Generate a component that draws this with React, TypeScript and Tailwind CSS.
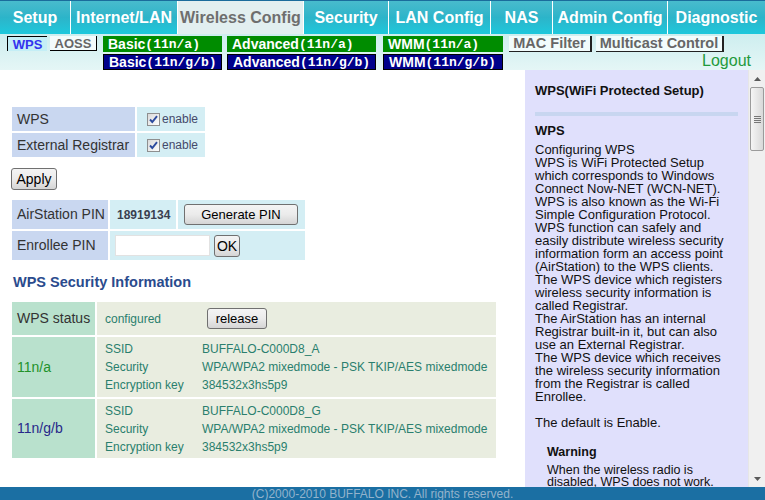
import type { ReactNode } from 'react'

const tabs = [
  { label: 'Setup', w: 'w-[70px]' },
  { label: 'Internet/LAN', w: 'w-[107px]' },
  { label: 'Wireless Config', w: 'w-[126px]', active: true },
  { label: 'Security', w: 'w-[85px]' },
  { label: 'LAN Config', w: 'w-[102px]' },
  { label: 'NAS', w: 'w-[62px]' },
  { label: 'Admin Config', w: 'w-[115px]' },
  { label: 'Diagnostic', w: 'w-[98px]' },
]

const helpLines = [
  'Configuring WPS',
  'WPS is WiFi Protected Setup',
  'which corresponds to Windows',
  'Connect Now-NET (WCN-NET).',
  'WPS is also known as the Wi-Fi',
  'Simple Configuration Protocol.',
  'WPS function can safely and',
  'easily distribute wireless security',
  'information form an access point',
  '(AirStation) to the WPS clients.',
  'The WPS device which registers',
  'wireless security information is',
  'called Registrar.',
  'The AirStation has an internal',
  'Registrar built-in it, but can also',
  'use an External Registrar.',
  'The WPS device which receives',
  'the wireless security information',
  'from the Registrar is called',
  'Enrollee.',
]

function Btn({ children, className }: { children: ReactNode; className: string }) {
  return (
    <button
      className={`rounded-[3px] border border-[#707070] bg-gradient-to-b from-[#f4f4f4] via-[#ebebeb] to-[#d5d5d5] text-black leading-none ${className}`}
    >
      {children}
    </button>
  )
}

function Check() {
  return (
    <svg width="13" height="13" viewBox="0 0 13 13">
      <defs>
        <linearGradient id="cb" x1="0" y1="0" x2="1" y2="1">
          <stop offset="0" stopColor="#d8d8d8" />
          <stop offset="1" stopColor="#ffffff" />
        </linearGradient>
      </defs>
      <rect x="0.5" y="0.5" width="12" height="12" fill="url(#cb)" stroke="#8e8f8f" />
      <path d="M3 6.5 L5.3 9 L10 3.2" fill="none" stroke="#2b4a9e" strokeWidth="1.9" />
    </svg>
  )
}

function BandBtn({ name, band, green }: { name: string; band: string; green?: boolean }) {
  return (
    <div
      className={`h-[16px] pl-[5px] flex items-center text-white font-bold leading-none ${
        green ? 'bg-[#008c00]' : 'bg-[#00008a] border border-black'
      }`}
    >
      <span className="text-[14px]">{name}</span>
      <span className="text-[13px] font-['Liberation_Mono',monospace]">{band}</span>
    </div>
  )
}

function Scrollbar() {
  return (
    <div className="w-[17px] flex flex-col bg-[#f0f0f0] border-l border-[#e6e6e6]">
      <div className="h-[17px] flex items-center justify-center">
        <svg width="7" height="4" viewBox="0 0 7 4">
          <path d="M0 4 L3.5 0 L7 4 Z" fill="#5a5a5a" />
        </svg>
      </div>
      <div className="h-[64px] mx-[1px] rounded-[2px] border border-[#9b9b9b] bg-gradient-to-r from-[#f5f5f5] to-[#d9d9d9] flex flex-col items-center justify-center gap-[1px]">
        <div className="w-[7px] h-[1px] bg-[#777]" />
        <div className="w-[7px] h-[1px] bg-[#777]" />
        <div className="w-[7px] h-[1px] bg-[#777]" />
        <div className="w-[7px] h-[1px] bg-[#777]" />
      </div>
      <div className="flex-1" />
      <div className="h-[17px] flex items-center justify-center">
        <svg width="7" height="4" viewBox="0 0 7 4">
          <path d="M0 0 L3.5 4 L7 0 Z" fill="#5a5a5a" />
        </svg>
      </div>
    </div>
  )
}

function BandInfo({ ssid }: { ssid: string }) {
  return (
    <div className="pl-[8px] py-[3px] grid grid-cols-[97px_1fr] text-[12px] leading-[18px] text-[#2a7f6e]">
      <span>SSID</span>
      <span>{ssid}</span>
      <span>Security</span>
      <span>WPA/WPA2 mixedmode - PSK TKIP/AES mixedmode</span>
      <span>Encryption key</span>
      <span>384532x3hs5p9</span>
    </div>
  )
}

export default function App() {
  return (
    <div className="w-[765px] h-[500px] flex flex-col overflow-hidden bg-white font-['Liberation_Sans',Arial,sans-serif]">
      {/* Main tabs */}
      <div className="h-[34px] flex border-t border-[#1a6c9c]">
        {tabs.map((t, i) => (
          <div
            key={t.label}
            className={`${t.w} flex items-center justify-center text-[16px] font-bold ${
              i > 0 ? 'border-l border-white' : ''
            } ${
              t.active
                ? 'bg-[#e2eff0] text-[#6e6e6e]'
                : 'bg-gradient-to-b from-[#48bbcd] via-[#2cb4c9] to-[#1cc8dc] text-white'
            }`}
          >
            {t.label}
          </div>
        ))}
      </div>

      {/* Sub navigation */}
      <div className="h-[36px] flex pl-[7px] pt-[2px] bg-gradient-to-b from-[#cdeeef] to-[#e5f6f6]">
        <div className="flex gap-[3px] h-[15px]">
          <span className="w-[40px] h-[15px] border-t border-l border-black bg-[#c4eef6] text-[#3333ee] font-bold text-[13px] leading-none flex items-center justify-center">
            WPS
          </span>
          <span className="w-[47px] h-[15px] border-r border-b border-black bg-[#f3fbfb] text-[#666] font-bold text-[13px] leading-none flex items-center justify-center">
            AOSS
          </span>
        </div>
        <div className="ml-[6px] w-[119px] flex flex-col gap-[2px]">
          <BandBtn name="Basic" band="(11n/a)" green />
          <BandBtn name="Basic" band="(11n/g/b)" />
        </div>
        <div className="ml-[5px] w-[149px] flex flex-col gap-[2px]">
          <BandBtn name="Advanced" band="(11n/a)" green />
          <BandBtn name="Advanced" band="(11n/g/b)" />
        </div>
        <div className="ml-[7px] w-[120px] flex flex-col gap-[2px]">
          <BandBtn name="WMM" band="(11n/a)" green />
          <BandBtn name="WMM" band="(11n/g/b)" />
        </div>
        <div className="ml-[6px] flex-1 flex flex-col pr-[14px]">
          <div className="flex gap-[4px]">
            <span className="w-[83px] h-[16px] border-r-2 border-b border-[#222] bg-[#f2fcfc] text-[#666] font-bold text-[14.5px] leading-none flex items-center justify-center">
              MAC Filter
            </span>
            <span className="w-[128px] h-[16px] border-r-2 border-b border-[#222] bg-[#f2fcfc] text-[#666] font-bold text-[14.5px] leading-none flex items-center justify-center">
              Multicast Control
            </span>
          </div>
          <div className="text-right text-[16px] leading-[17px] text-[#1f9a3c]">Logout</div>
        </div>
      </div>

      {/* Content */}
      <div className="flex flex-1 min-h-0">
        <div className="w-[525px] pl-[12px] pt-[37px] text-[#333]">
          <div className="w-[193px] grid grid-cols-[123px_68px] gap-[2px] text-[14px]">
            <div className="h-[24px] pl-[5px] flex items-center bg-[#c9d7f0]">WPS</div>
            <div className="h-[24px] pl-[10px] flex items-center gap-[2px] bg-[#d4eef4] text-[12px] text-[#44496a]">
              <Check />
              <span>enable</span>
            </div>
            <div className="h-[24px] pl-[5px] flex items-center bg-[#c9d7f0]">External Registrar</div>
            <div className="h-[24px] pl-[10px] flex items-center gap-[2px] bg-[#d4eef4] text-[12px] text-[#44496a]">
              <Check />
              <span>enable</span>
            </div>
          </div>

          <Btn className="mt-[11px] -ml-[1px] h-[22px] w-[46px] text-[14px]">Apply</Btn>

          <div className="mt-[9px] w-[293px] grid grid-cols-[96px_66px_127px] gap-[2px] text-[14px]">
            <div className="h-[29px] pl-[5px] flex items-center bg-[#c9d7f0]">AirStation PIN</div>
            <div className="h-[29px] pl-[7px] flex items-center bg-[#d4eef4] text-[12px] font-bold text-[#3a4050]">
              18919134
            </div>
            <div className="h-[29px] pl-[6px] flex items-center bg-[#d4eef4]">
              <Btn className="h-[21px] w-[114px] text-[13px]">Generate PIN</Btn>
            </div>
            <div className="h-[29px] pl-[5px] flex items-center bg-[#c9d7f0]">Enrollee PIN</div>
            <div className="col-span-2 h-[29px] pl-[5px] flex items-center gap-[4px] bg-[#d4eef4]">
              <div className="w-[95px] h-[21px] bg-white border border-[#e2e2e2]" />
              <Btn className="h-[22px] w-[26px] text-[14px]">OK</Btn>
            </div>
          </div>

          <div className="mt-[14px] h-[18px] pl-[1px] flex items-center text-[14.5px] font-bold text-[#2a4b8d]">
            WPS Security Information
          </div>

          <div className="mt-[10px] w-[484px] grid grid-cols-[83px_399px] gap-[2px] text-[14px]">
            <div className="h-[33px] pl-[5px] flex items-center bg-[#b9e1cd] text-[#333]">WPS status</div>
            <div className="h-[33px] pl-[8px] flex items-center bg-[#e9ede0]">
              <span className="w-[102px] text-[12px] text-[#2a7f6e]">configured</span>
              <Btn className="h-[21px] w-[60px] text-[13px]">release</Btn>
            </div>
            <div className="h-[60px] pl-[5px] flex items-center bg-[#b9e1cd] text-[#22922a]">11n/a</div>
            <div className="h-[60px] bg-[#e9ede0]">
              <BandInfo ssid="BUFFALO-C000D8_A" />
            </div>
            <div className="h-[59px] pl-[5px] flex items-center bg-[#b9e1cd] text-[#28288a]">11n/g/b</div>
            <div className="h-[59px] bg-[#e9ede0]">
              <BandInfo ssid="BUFFALO-C000D8_G" />
            </div>
          </div>
        </div>

        {/* Help panel */}
        <div className="w-[223px] bg-[#e0e0fc] overflow-hidden px-[10px] pt-[13px] text-[#111]">
          <div className="text-[13px] font-bold leading-[16px]">WPS(WiFi Protected Setup)</div>
          <div className="mt-[13px] h-[4px] bg-[#c8d6f0]" />
          <div className="mt-[8px] text-[13px] font-bold leading-[14px]">WPS</div>
          <div className="mt-[5px] text-[13px] leading-[13px] whitespace-nowrap">
            {helpLines.map((l) => (
              <div key={l}>{l}</div>
            ))}
            <div className="h-[13px]" />
            <div>The default is Enable.</div>
          </div>
          <div className="mt-[16px] pl-[12px] text-[12.5px] whitespace-nowrap">
            <div className="font-bold leading-[14px]">Warning</div>
            <div className="mt-[5px] leading-[12px]">
              <div>When the wireless radio is</div>
              <div>disabled, WPS does not work.</div>
            </div>
          </div>
        </div>

        <Scrollbar />
      </div>

      {/* Footer */}
      <div className="h-[13px] overflow-hidden bg-[#1b6fa3] text-center text-[12px] leading-[14px] text-[#93b3cc]">
        (C)2000-2010 BUFFALO INC. All rights reserved.
      </div>
    </div>
  )
}
